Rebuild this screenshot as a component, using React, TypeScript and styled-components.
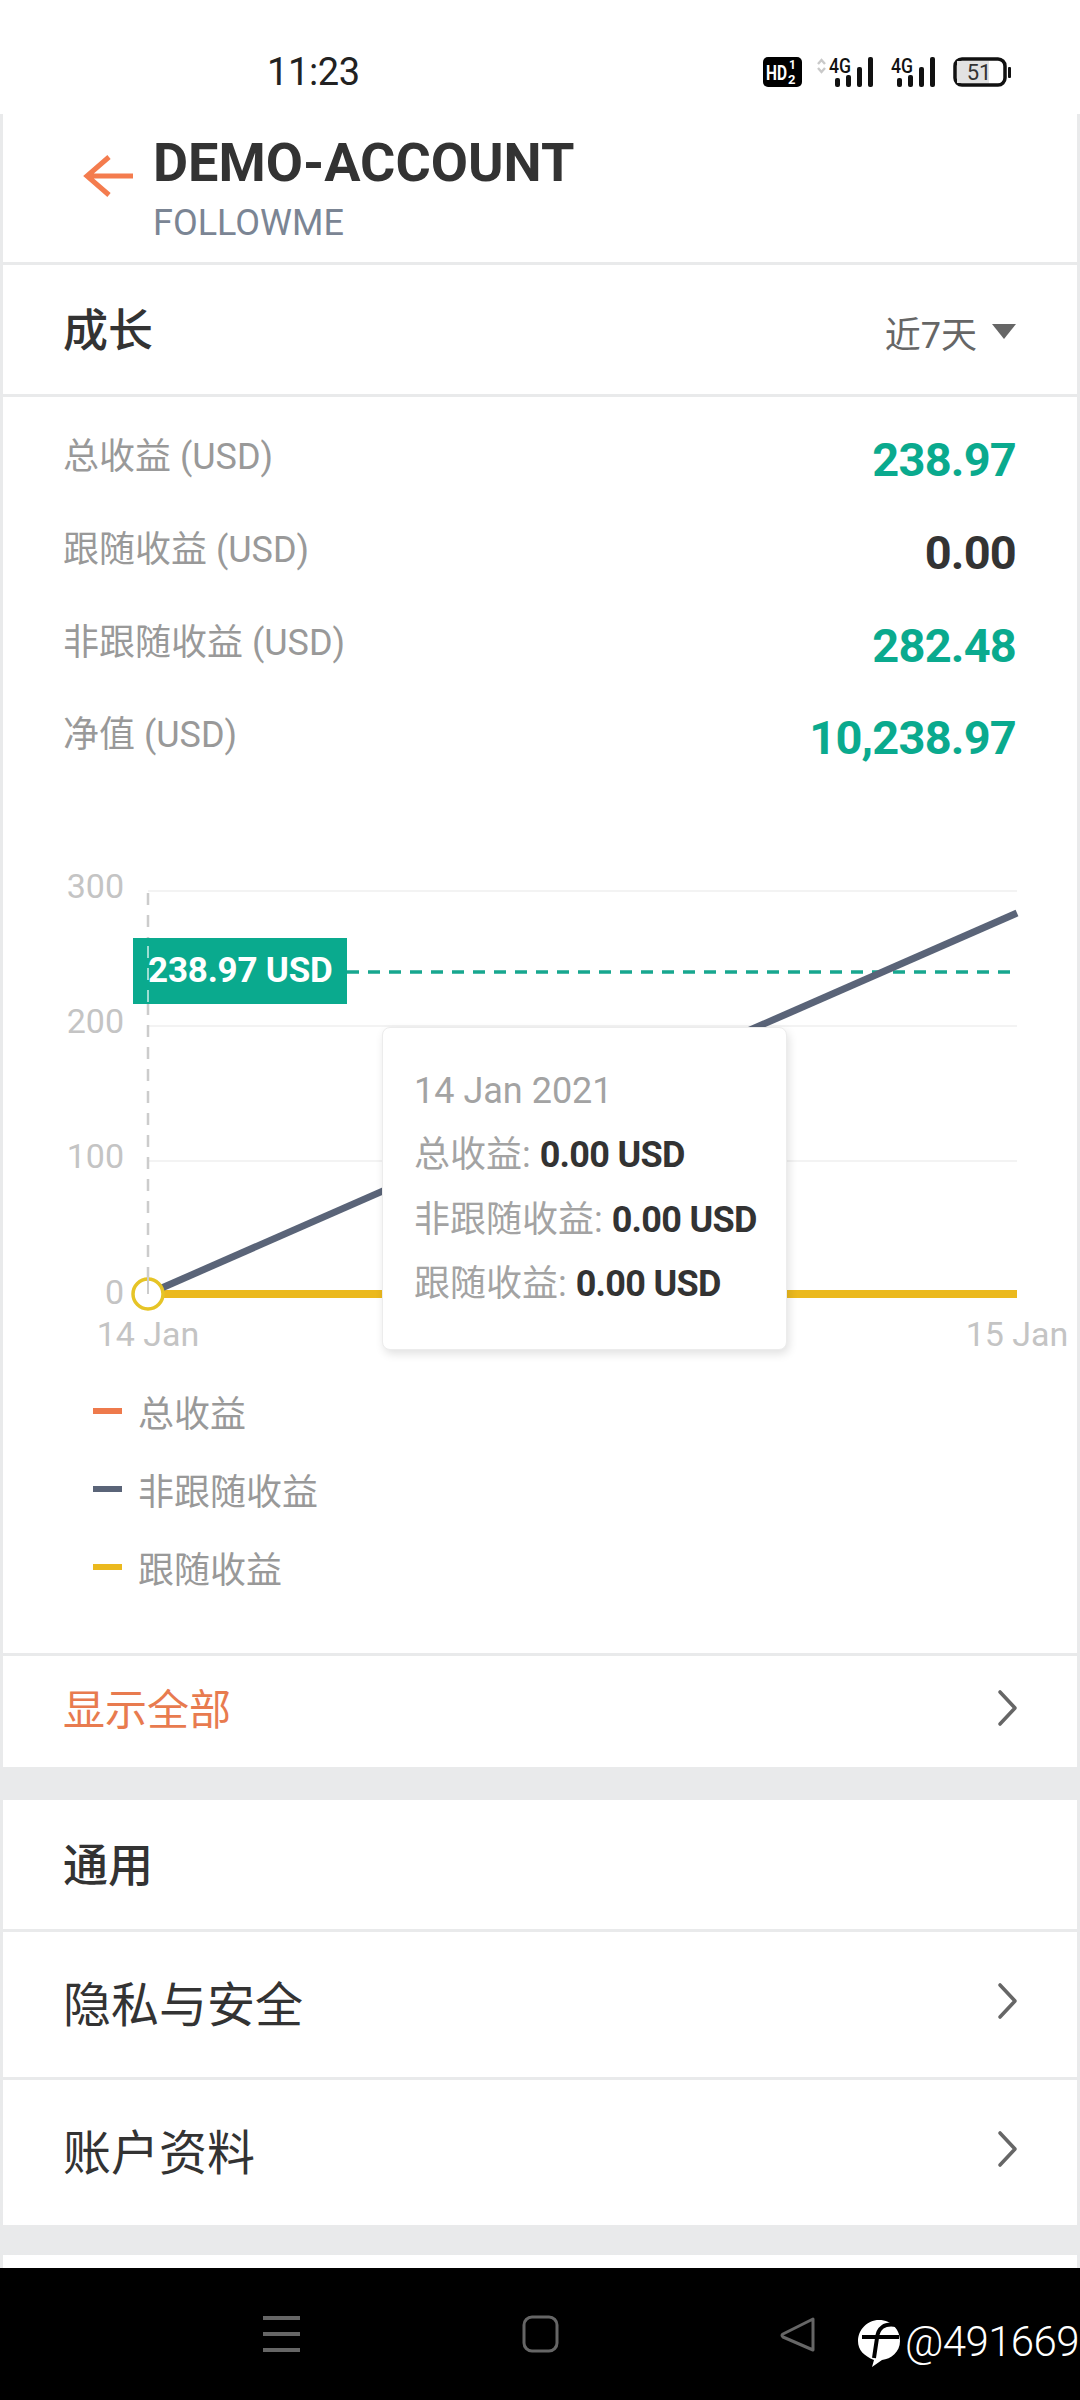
import React from 'react'
import styled, { createGlobalStyle } from 'styled-components'

const GlobalStyle = createGlobalStyle`
    html, body {
        margin: 0;
        padding: 0;
        background: #fff;
    }
    * {
        box-sizing: border-box;
    }
`;

const FONT = `Roboto, "Noto Sans CJK SC", sans-serif`;

const Page = styled.div`
    display: flex;
    flex-direction: column;
    width: 1080px;
    height: 2400px;
    overflow: hidden;
    font-family: ${FONT};
    background: #e9eaeb;
`;

const StatusBar = styled.div`
    display: flex;
    align-items: center;
    flex: 0 0 114px;
    height: 114px;
    padding: 30px 69px 0 267px;
    background: #fff;
`;

const Clock = styled.span`
    font-size: 38px;
    line-height: 44px;
    letter-spacing: -0.4px;
    color: #222;
`;

const StatusIcons = styled.svg`
    margin-left: auto;
    display: block;
`;

const Card = styled.section<{ $height: number; $gap?: number }>`
    flex: 0 0 ${props => props.$height}px;
    height: ${props => props.$height}px;
    margin: 0 3px ${props => props.$gap ?? 3}px;
    background: #fff;
`;

const AccountHeader = styled(Card)`
    display: flex;
    align-items: flex-start;
    padding: 18px 0 0 80px;
`;

const BackArrow = styled.svg`
    flex: none;
    margin-top: 22px;
    margin-right: 18px;
`;

const AccountText = styled.div`
    display: flex;
    flex-direction: column;
`;

const AccountName = styled.div`
    font-size: 54px;
    line-height: 62px;
    font-weight: 700;
    color: #333;
`;

const AccountBroker = styled.div`
    margin-top: 9px;
    font-size: 36px;
    line-height: 40px;
    color: #7b8594;
`;

const TitleRow = styled(Card)`
    display: flex;
    align-items: center;
    justify-content: space-between;
    padding: 4px 61px 0 60px;
`;

const SectionTitle = styled.h2`
    margin: 0;
    font-size: 45px;
    line-height: 56px;
    font-weight: 500;
    color: #333;
`;

const RangePicker = styled.div`
    display: flex;
    align-items: center;
    gap: 15px;
    font-size: 36px;
    color: #666;
`;

const DownTriangle = styled.span`
    width: 0;
    height: 0;
    border-left: 12px solid transparent;
    border-right: 12px solid transparent;
    border-top: 15px solid #666;
`;

const GrowthCard = styled(Card)`
    display: flex;
    flex-direction: column;
    padding-top: 17px;
`;

const Stats = styled.div`
    display: flex;
    flex-direction: column;
    padding: 0 61px 0 60px;
`;

const StatRow = styled.div`
    display: flex;
    justify-content: space-between;
    align-items: center;
    height: 92.7px;
`;

const StatLabel = styled.span`
    font-size: 36px;
    line-height: 46px;
    color: #999;
    margin-top: -6px;
`;

const StatValue = styled.span<{ $positive?: boolean }>`
    font-size: 47px;
    line-height: 56px;
    font-weight: 700;
    letter-spacing: -0.8px;
    color: ${props => props.$positive ? '#0aaa8e' : '#333'};
`;

const Chart = styled.div`
    position: relative;
    width: 1074px;
    height: 490px;
    margin-top: 86px;
    svg {
        display: block;
    }
`;

const PriceTag = styled.div`
    position: absolute;
    left: 130px;
    top: 67px;
    width: 214px;
    height: 66px;
    padding-left: 15px;
    font-size: 35px;
    line-height: 66px;
    font-weight: 700;
    letter-spacing: -0.2px;
    color: #fff;
    background: #0aaa8e;
    white-space: nowrap;
    &::before {
        content: "";
        position: absolute;
        left: 14px;
        top: 8px;
        bottom: 0;
        width: 2px;
        background: repeating-linear-gradient(to bottom, rgba(255, 255, 255, 0.6) 0 12px, transparent 12px 22px);
    }
`;

const Tooltip = styled.div`
    position: absolute;
    left: 379px;
    top: 156px;
    width: 405px;
    height: 323px;
    padding: 31px 0 0 31px;
    background: #fff;
    border: 1px solid #ececec;
    border-radius: 8px;
    box-shadow: 2px 4px 10px rgba(0, 0, 0, 0.12);
`;

const TooltipLine = styled.div`
    height: 64.5px;
    font-size: 36px;
    line-height: 64px;
    color: #a3a3a3;
    white-space: nowrap;
    b {
        font-weight: 700;
        letter-spacing: -0.7px;
        color: #333;
    }
`;

const Legend = styled.div`
    display: flex;
    flex-direction: column;
    margin-top: 11px;
    padding-left: 90px;
`;

const LegendRow = styled.div`
    display: flex;
    align-items: center;
    gap: 16px;
    height: 78px;
    font-size: 36px;
    color: #999;
`;

const LegendSwatch = styled.i<{ $color: string }>`
    width: 29px;
    height: 6px;
    background: ${props => props.$color};
`;

const LinkRow = styled(Card)`
    display: flex;
    align-items: center;
    justify-content: space-between;
    padding: 0 58px 8px 60px;
`;

const ShowAll = styled.span`
    font-size: 42px;
    margin-top: -2px;
    color: #e87b4f;
`;

const MenuLabel = styled.span`
    font-size: 48px;
    color: #333;
`;

const BottomStrip = styled.div`
    flex: 0 0 13px;
    margin: 0 3px;
    background: #fff;
`;

const NavBar = styled.nav`
    flex: 1;
    position: relative;
    display: flex;
    align-items: flex-start;
    background: #000;
`;

const NavIcons = styled.svg`
    display: block;
`;

const Watermark = styled.div`
    position: absolute;
    left: 905px;
    top: 47px;
    font-weight: 300;
    font-size: 42px;
    line-height: 54px;
    letter-spacing: -0.6px;
    color: #fff;
    white-space: nowrap;
`;

const Chevron = () => (
    <svg width="22" height="38" viewBox="0 0 22 38" fill="none">
        <path d="M3 3 L18 19 L3 35" stroke="#666" strokeWidth="3.6" strokeLinecap="round" strokeLinejoin="round" />
    </svg>
)

const Signal = ({ x, arrows }: { x: number; arrows?: boolean }) => (
    <g transform={`translate(${x} 0)`} fill="#111">
        {arrows && <path d="M-17 3 L-13.5 -1 L-10 3 M-17 7 L-13.5 11 L-10 7" transform="translate(0 4)" fill="none" stroke="#c9c9c9" strokeWidth="2.4" />}
        <text x="-6" y="16" fontFamily="Roboto, sans-serif" fontSize="20" fontWeight="500" textLength="22" lengthAdjust="spacingAndGlyphs">4G</text>
        <rect x="0" y="21" width="5" height="9" rx="2" />
        <rect x="11" y="18" width="5" height="12" rx="2" />
        <rect x="22" y="10" width="5" height="20" rx="2" />
        <rect x="33" y="0" width="5" height="30" rx="2" />
    </g>
)

const stats = [
    { label: '总收益 (USD)', value: '238.97', positive: true },
    { label: '跟随收益 (USD)', value: '0.00', positive: false },
    { label: '非跟随收益 (USD)', value: '282.48', positive: true },
    { label: '净值 (USD)', value: '10,238.97', positive: true },
]

const legend = [
    { label: '总收益', color: '#ee7a4c' },
    { label: '非跟随收益', color: '#5a6478' },
    { label: '跟随收益', color: '#ebb91e' },
]

const yTicks = [
    { label: '300', tick: 887, grid: 890 },
    { label: '200', tick: 1022, grid: 1025 },
    { label: '100', tick: 1157, grid: 1160 },
]

const App = () => {
    return (
        <Page>
            <GlobalStyle />
            <StatusBar>
                <Clock>11:23</Clock>
                <StatusIcons width="248" height="30" viewBox="763 57 248 30">
                    <g transform="translate(0 57)">
                        <rect x="763" y="0" width="39" height="30" rx="5" fill="#000" />
                        <text x="766" y="23" fill="#fff" fontFamily="Roboto, sans-serif" fontSize="21" fontWeight="700" textLength="21" lengthAdjust="spacingAndGlyphs">HD</text>
                        <text x="789" y="12" fill="#fff" fontFamily="Roboto, sans-serif" fontSize="12" fontWeight="700">1</text>
                        <text x="788" y="27" fill="#fff" fontFamily="Roboto, sans-serif" fontSize="13" fontWeight="700">2</text>
                        <Signal x={835} arrows />
                        <Signal x={897} />
                        <rect x="955" y="2" width="50" height="26" rx="7" fill="#fff" stroke="#111" strokeWidth="3.5" />
                        <path d="M957 4 H989 V26 H957 Z" fill="#e2e2e2" />
                        <text x="979" y="23" fill="#333" fontFamily="Roboto, sans-serif" fontSize="22" textAnchor="middle">51</text>
                        <rect x="1008" y="10" width="3" height="11" rx="1" fill="#111" />
                    </g>
                </StatusIcons>
            </StatusBar>

            <AccountHeader $height={148}>
                <BackArrow width="52" height="44" viewBox="0 0 52 44" fill="none">
                    <path d="M50 22 H5 M26 3 L4 22 L26 41" stroke="#f47c4e" strokeWidth="5" />
                </BackArrow>
                <AccountText>
                    <AccountName>DEMO-ACCOUNT</AccountName>
                    <AccountBroker>FOLLOWME</AccountBroker>
                </AccountText>
            </AccountHeader>

            <TitleRow $height={129}>
                <SectionTitle>成长</SectionTitle>
                <RangePicker>
                    近7天
                    <DownTriangle />
                </RangePicker>
            </TitleRow>

            <GrowthCard $height={1256}>
                <Stats>
                    {stats.map(stat => (
                        <StatRow key={stat.label}>
                            <StatLabel>{stat.label}</StatLabel>
                            <StatValue $positive={stat.positive}>{stat.value}</StatValue>
                        </StatRow>
                    ))}
                </Stats>
                <Chart>
                    <svg width="1074" height="490" viewBox="3 870 1074 490" fill="none">
                        {yTicks.map(tick => (
                            <g key={tick.label}>
                                <line x1="148" x2="1017" y1={tick.grid} y2={tick.grid} stroke="#f3f3f3" strokeWidth="2" />
                                <text x="124" y={tick.tick + 10} textAnchor="end" fill="#c4c4c4" fontFamily="Roboto, sans-serif" fontSize="34">{tick.label}</text>
                            </g>
                        ))}
                        <text x="124" y="1303" textAnchor="end" fill="#c4c4c4" fontFamily="Roboto, sans-serif" fontSize="34">0</text>
                        <line x1="148" x2="148" y1="892" y2="1293" stroke="#cccccc" strokeWidth="2.5" strokeDasharray="12 10" />
                        <line x1="347" x2="1017" y1="971" y2="971" stroke="#17a78f" strokeWidth="3.5" strokeDasharray="12 9" />
                        <line x1="148" x2="1017" y1="1293" y2="1293" stroke="#ebb91e" strokeWidth="8" />
                        <line x1="148" x2="1017" y1="1293" y2="912" stroke="#5a6478" strokeWidth="7" />
                        <circle cx="148" cy="1293" r="15" fill="#fff" stroke="#e6c426" strokeWidth="3.5" />
                        <line x1="148" x2="148" y1="1276" y2="1293" stroke="#cccccc" strokeWidth="2" />
                        <text x="148" y="1345" textAnchor="middle" fill="#c4c4c4" fontFamily="Roboto, sans-serif" fontSize="34">14 Jan</text>
                        <text x="1017" y="1345" textAnchor="middle" fill="#c4c4c4" fontFamily="Roboto, sans-serif" fontSize="34">15 Jan</text>
                    </svg>
                    <PriceTag>238.97 USD</PriceTag>
                    <Tooltip>
                        <TooltipLine>14 Jan 2021</TooltipLine>
                        <TooltipLine>总收益: <b>0.00 USD</b></TooltipLine>
                        <TooltipLine>非跟随收益: <b>0.00 USD</b></TooltipLine>
                        <TooltipLine>跟随收益: <b>0.00 USD</b></TooltipLine>
                    </Tooltip>
                </Chart>
                <Legend>
                    {legend.map(item => (
                        <LegendRow key={item.label}>
                            <LegendSwatch $color={item.color} />
                            {item.label}
                        </LegendRow>
                    ))}
                </Legend>
            </GrowthCard>

            <LinkRow $height={111} $gap={33}>
                <ShowAll>显示全部</ShowAll>
                <Chevron />
            </LinkRow>

            <TitleRow $height={129}>
                <SectionTitle>通用</SectionTitle>
            </TitleRow>

            <LinkRow $height={145}>
                <MenuLabel>隐私与安全</MenuLabel>
                <Chevron />
            </LinkRow>

            <LinkRow $height={145} $gap={30}>
                <MenuLabel>账户资料</MenuLabel>
                <Chevron />
            </LinkRow>

            <BottomStrip />

            <NavBar>
                <NavIcons width="1080" height="132" viewBox="0 2268 1080 132" fill="none">
                    <path d="M263 2318 H300 M263 2334 H300 M263 2350 H300" stroke="#666" strokeWidth="4" />
                    <rect x="524" y="2317" width="33" height="34" rx="8" stroke="#666" strokeWidth="3" />
                    <path d="M813 2319 L783 2334 Q781 2335 783 2337 L813 2350 Z" stroke="#666" strokeWidth="3" strokeLinejoin="round" />
                    <path d="M879 2320 C892 2320 900 2330 900 2341 C900 2352 891 2359 882 2360 L872 2367 L874 2360 C864 2356 858 2350 858 2341 C858 2330 867 2320 879 2320 Z" fill="#fff" />
                    <path d="M896 2325 C884 2323 878 2328 877 2338 L874 2358 M862 2337 H899" stroke="#000" strokeWidth="4" />
                </NavIcons>
                <Watermark>@491669</Watermark>
            </NavBar>
        </Page>
    )
}

export default App
